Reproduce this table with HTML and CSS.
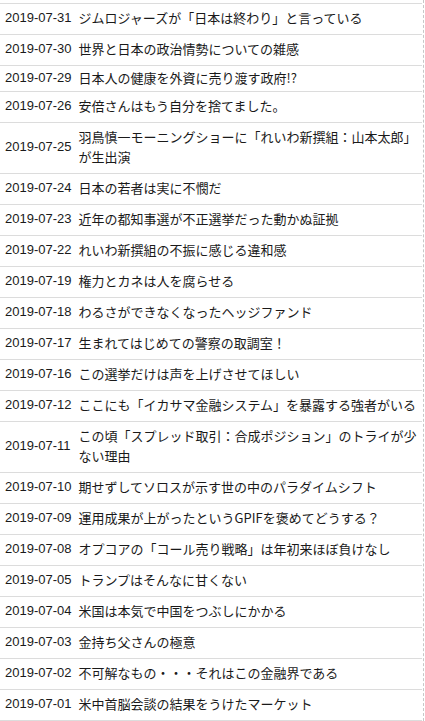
FILE: index.html
```html
<!DOCTYPE html>
<html lang="ja">
<head>
<meta charset="utf-8">
<title>記事一覧</title>
<link rel="stylesheet" href="styles.css">
</head>
<body>
<div class="wrap">
  <table class="posts">
    <tbody>
      <tr><td class="date">2019-07-31</td><td class="title">ジムロジャーズが「日本は終わり」と言っている</td></tr>
      <tr><td class="date">2019-07-30</td><td class="title">世界と日本の政治情勢についての雑感</td></tr>
      <tr class="tight"><td class="date">2019-07-29</td><td class="title">日本人の健康を外資に売り渡す政府!?</td></tr>
      <tr><td class="date">2019-07-26</td><td class="title">安倍さんはもう自分を捨てました。</td></tr>
      <tr><td class="date">2019-07-25</td><td class="title">羽鳥慎一モーニングショーに「れいわ新撰組：山本太郎」が生出演</td></tr>
      <tr><td class="date">2019-07-24</td><td class="title">日本の若者は実に不憫だ</td></tr>
      <tr><td class="date">2019-07-23</td><td class="title">近年の都知事選が不正選挙だった動かぬ証拠</td></tr>
      <tr><td class="date">2019-07-22</td><td class="title">れいわ新撰組の不振に感じる違和感</td></tr>
      <tr><td class="date">2019-07-19</td><td class="title">権力とカネは人を腐らせる</td></tr>
      <tr><td class="date">2019-07-18</td><td class="title">わるさができなくなったヘッジファンド</td></tr>
      <tr><td class="date">2019-07-17</td><td class="title">生まれてはじめての警察の取調室！</td></tr>
      <tr><td class="date">2019-07-16</td><td class="title">この選挙だけは声を上げさせてほしい</td></tr>
      <tr><td class="date">2019-07-12</td><td class="title">ここにも「イカサマ金融システム」を暴露する強者がいる</td></tr>
      <tr><td class="date">2019-07-11</td><td class="title">この頃「スプレッド取引：合成ポジション」のトライが少ない理由</td></tr>
      <tr><td class="date">2019-07-10</td><td class="title">期せずしてソロスが示す世の中のパラダイムシフト</td></tr>
      <tr><td class="date">2019-07-09</td><td class="title">運用成果が上がったというGPIFを褒めてどうする？</td></tr>
      <tr><td class="date">2019-07-08</td><td class="title">オプコアの「コール売り戦略」は年初来ほぼ負けなし</td></tr>
      <tr><td class="date">2019-07-05</td><td class="title">トランプはそんなに甘くない</td></tr>
      <tr><td class="date">2019-07-04</td><td class="title">米国は本気で中国をつぶしにかかる</td></tr>
      <tr><td class="date">2019-07-03</td><td class="title">金持ち父さんの極意</td></tr>
      <tr><td class="date">2019-07-02</td><td class="title">不可解なもの・・・それはこの金融界である</td></tr>
      <tr><td class="date">2019-07-01</td><td class="title">米中首脳会談の結果をうけたマーケット</td></tr>
    </tbody>
  </table>
</div>
</body>
</html>
```

FILE: styles.css
```css
html, body {
  margin: 0;
  padding: 0;
  background: #fff;
}

body {
  font-family: "Liberation Sans", "Noto Sans CJK JP", sans-serif;
  color: #1a1a1a;
}

.wrap {
  width: 424px;
  min-height: 721px;
  padding-top: 3px;
  border-right: 1px dashed #c8c8c8;
  box-sizing: border-box;
}

.posts {
  width: 422px;
  border-collapse: collapse;
}

.posts td {
  border-top: 1px solid #dcdcdc;
  border-bottom: 1px solid #dcdcdc;
  padding: 4px 3px 6px 3px;
  font-size: 13px;
  line-height: 20px;
  vertical-align: middle;
}

.posts .date {
  padding-left: 5px;
  padding-right: 4px;
  white-space: nowrap;
  font-family: "Liberation Sans", Arial, sans-serif;
}

.posts .title {
  font-family: "Noto Sans CJK JP", "Liberation Sans", sans-serif;
}

.posts .tight td {
  padding-top: 2px;
  padding-bottom: 3px;
}
```
